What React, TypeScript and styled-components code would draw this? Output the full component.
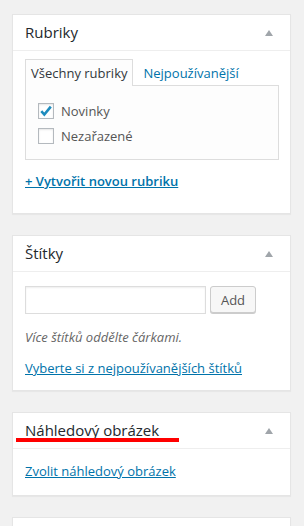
import styled, { createGlobalStyle } from 'styled-components';

const GlobalStyle = createGlobalStyle`
  html, body {
    margin: 0;
    padding: 0;
    background: #f1f1f1;
  }
  body {
    font-family: "Open Sans", "Liberation Sans", sans-serif;
    font-size: 13px;
    color: #444;
  }
`;

const Sidebar = styled.div`
  display: flex;
  flex-direction: column;
  gap: 21px;
  padding: 14px 13px 0 12px;
  height: 526px;
  box-sizing: border-box;
  overflow: hidden;
`;

const Postbox = styled.div`
  background: #fff;
  border: 1px solid #e5e5e5;
  box-shadow: 0 1px 1px rgba(0, 0, 0, 0.04);
  flex-shrink: 0;
`;

const EmptyPostbox = styled(Postbox)`
  height: 40px;
`;

const Header = styled.div`
  position: relative;
  display: flex;
  align-items: center;
  justify-content: space-between;
  height: 35px;
  padding: 0 12px;
  border-bottom: 1px solid #eee;
`;

const Title = styled.h2`
  margin: 0;
  font-size: 15px;
  font-weight: 400;
  color: #23282d;
  line-height: 1;
  padding-bottom: 1px;
`;

const Toggle = styled.span`
  width: 0;
  height: 0;
  margin-right: 5px;
  border-left: 4px solid transparent;
  border-right: 4px solid transparent;
  border-bottom: 6px solid #a0a5aa;
`;

// red annotation stroke drawn under the heading
const Highlight = styled.span`
  position: absolute;
  left: 3px;
  top: 25px;
  width: 163px;
  height: 4px;
  background: #ff0000;
`;

const Inside = styled.div<{ $pad: string }>`
  padding: ${(p) => p.$pad};
`;

const TabRow = styled.div`
  display: flex;
  align-items: flex-end;
`;

const Tab = styled.div<{ $active?: boolean }>`
  height: 26px;
  display: flex;
  align-items: center;
  padding: 0 ${(p) => (p.$active ? '5px' : '9px')};
  color: ${(p) => (p.$active ? '#32373c' : '#0073aa')};
  background: ${(p) => (p.$active ? '#fdfdfd' : 'transparent')};
  border: 1px solid ${(p) => (p.$active ? '#ddd' : 'transparent')};
  border-bottom: none;
  position: relative;
  margin-bottom: -1px;
  z-index: 1;
`;

const Panel = styled.div`
  width: 254px;
  box-sizing: border-box;
  border: 1px solid #ddd;
  background: #fdfdfd;
  padding: 17px 12px 15px;
  display: flex;
  flex-direction: column;
  gap: 9px;
`;

const CheckRow = styled.label`
  display: flex;
  align-items: center;
  gap: 7px;
  height: 16px;
  color: #555;
`;

const Box = styled.span`
  width: 14px;
  height: 14px;
  border: 1px solid #b4b9be;
  background: #fff;
  box-shadow: inset 0 1px 2px rgba(0, 0, 0, 0.1);
  display: flex;
  align-items: center;
  justify-content: center;
`;

const Link = styled.a<{ $bold?: boolean }>`
  color: #0073aa;
  text-decoration: underline;
  font-weight: ${(p) => (p.$bold ? 600 : 400)};
  display: block;
  line-height: 18px;
`;

const Spacer = styled.div<{ $h: number }>`
  height: ${(p) => p.$h}px;
`;

const TagRow = styled.div`
  display: flex;
  gap: 4px;
`;

const Input = styled.div`
  width: 181px;
  height: 28px;
  box-sizing: border-box;
  border: 1px solid #ddd;
  background: #fff;
  box-shadow: inset 0 1px 2px rgba(0, 0, 0, 0.07);
`;

const Button = styled.div`
  width: 46px;
  height: 27px;
  box-sizing: border-box;
  border: 1px solid #ccc;
  border-radius: 3px;
  background: #f7f7f7;
  box-shadow: 0 1px 0 #ccc;
  color: #555;
  display: flex;
  align-items: center;
  justify-content: center;
`;

const Hint = styled.p`
  margin: 14px 0 0;
  font-style: italic;
  color: #666;
  line-height: 18px;
`;

function Check({ checked }: { checked?: boolean }) {
  return (
    <Box>
      {checked && (
        <svg width="14" height="14" viewBox="0 0 14 14">
          <path d="M2.3 7.2 L5.3 10.6 L11.8 2.6" fill="none" stroke="#1e8cbe" strokeWidth="2.6" strokeLinejoin="miter" />
        </svg>
      )}
    </Box>
  );
}

export default function App() {
  return (
    <>
      <GlobalStyle />
      <Sidebar>
        <Postbox>
          <Header>
            <Title>Rubriky</Title>
            <Toggle />
          </Header>
          <Inside $pad="8px 12px 23px">
            <TabRow>
              <Tab $active>Všechny rubriky</Tab>
              <Tab>Nejpoužívanější</Tab>
            </TabRow>
            <Panel>
              <CheckRow>
                <Check checked />
                Novinky
              </CheckRow>
              <CheckRow>
                <Check />
                Nezařazené
              </CheckRow>
            </Panel>
            <Spacer $h={12} />
            <Link $bold>+ Vytvořit novou rubriku</Link>
          </Inside>
        </Postbox>

        <Postbox>
          <Header>
            <Title>Štítky</Title>
            <Toggle />
          </Header>
          <Inside $pad="14px 12px 13px">
            <TagRow>
              <Input />
              <Button>Add</Button>
            </TagRow>
            <Hint>Více štítků oddělte čárkami.</Hint>
            <Spacer $h={13} />
            <Link>Vyberte si z nejpoužívanějších štítků</Link>
          </Inside>
        </Postbox>

        <Postbox>
          <Header>
            <Title>Náhledový obrázek</Title>
            <Toggle />
            <Highlight />
          </Header>
          <Inside $pad="13px 12px 15px">
            <Link>Zvolit náhledový obrázek</Link>
          </Inside>
        </Postbox>

        <EmptyPostbox />
      </Sidebar>
    </>
  );
}
